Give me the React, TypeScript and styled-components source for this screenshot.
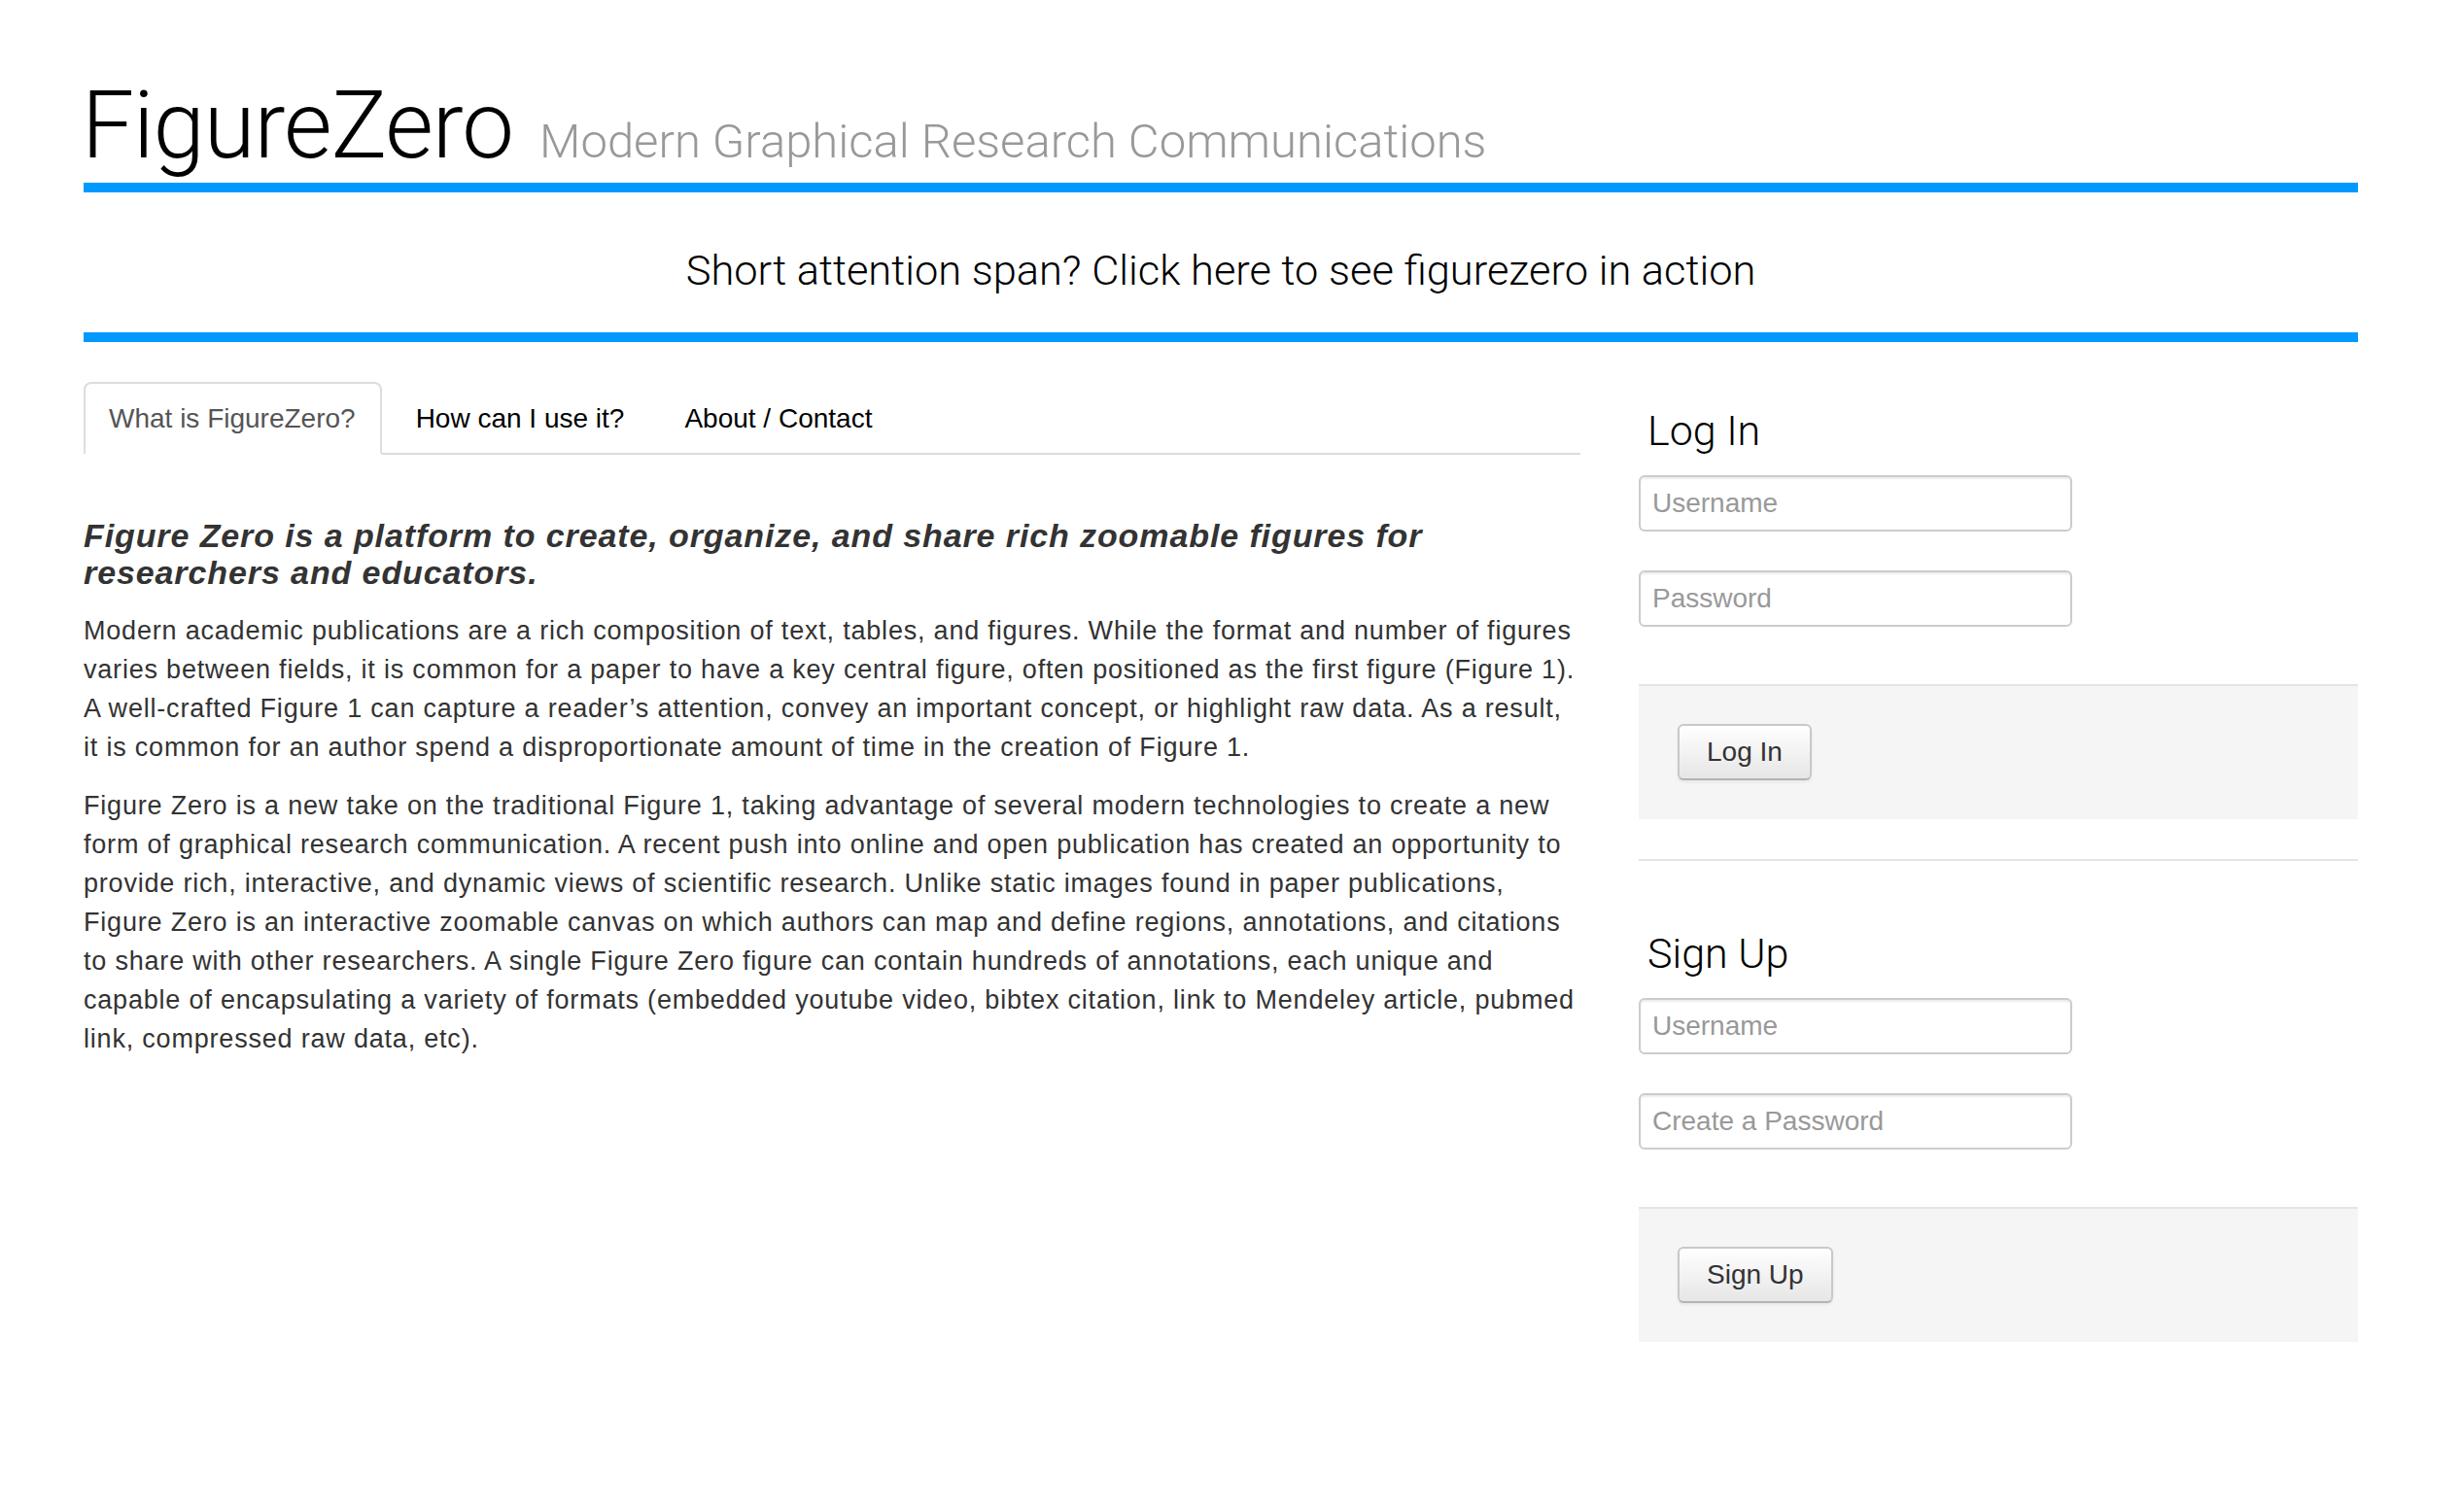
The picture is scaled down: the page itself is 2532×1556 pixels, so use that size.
import { FunctionComponent } from "react";
import styled, { createGlobalStyle } from "styled-components";

const GlobalStyle = createGlobalStyle`
  html, body {
    margin: 0;
    padding: 0;
    background: #fff;
  }
  body {
    font-family: "Liberation Sans", Arial, sans-serif;
    color: #333;
  }
  * {
    box-sizing: border-box;
  }
`;

const Page = styled.div`
  width: 2340px;
  margin-left: 86px;
`;

const Header = styled.header`
  display: flex;
  align-items: baseline;
  gap: 27px;
  padding: 81px 0 11px;
  border-bottom: 10px solid #0099ff;
`;

const Title = styled.h1`
  margin: 0 0 0 -2px;
  font-family: Roboto, "Liberation Sans", sans-serif;
  font-weight: 300;
  font-size: 96px;
  line-height: 96px;
  color: #000;
  letter-spacing: -1px;
`;

const Tagline = styled.small`
  font-family: Roboto, "Liberation Sans", sans-serif;
  font-weight: 300;
  font-size: 49px;
  line-height: 1;
  color: #999;
`;

const Promo = styled.a`
  display: block;
  padding: 56px 0 38px;
  text-align: center;
  font-family: Roboto, "Liberation Sans", sans-serif;
  font-weight: 300;
  font-size: 43.4px;
  line-height: 50px;
  color: #000;
  text-decoration: none;
  border-bottom: 10px solid #0099ff;
`;

const Main = styled.main`
  display: grid;
  grid-template-columns: 1540px 740px;
  column-gap: 60px;
  align-items: start;
  margin-top: 41px;
`;

const TabBar = styled.ul`
  display: flex;
  margin: 0;
  padding: 0;
  list-style: none;
  border-bottom: 2px solid #ddd;
`;

const Tab = styled.li<{ $active?: boolean }>`
  margin: 0 9px -2px 0;
  padding: 16px 25px 15px 24px;
  font-size: 28px;
  line-height: 40px;
  color: ${(p) => (p.$active ? "#555" : "#000")};
  background: ${(p) => (p.$active ? "#fff" : "transparent")};
  border: 2px solid transparent;
  border-color: ${(p) => (p.$active ? "#ddd #ddd transparent" : "transparent")};
  border-radius: 8px 8px 0 0;
  cursor: pointer;
`;

const Lead = styled.h4`
  margin: 64px 0 21px;
  font-size: 34px;
  line-height: 38px;
  font-weight: 700;
  font-style: italic;
  letter-spacing: 0.9px;
  color: #333;
  white-space: nowrap;
`;

const Paragraph = styled.p`
  margin: 0 0 20px;
  font-size: 27px;
  line-height: 40px;
  letter-spacing: 0.8px;
  color: #333;
  white-space: nowrap;
`;

const Side = styled.aside`
  display: flex;
  flex-direction: column;
`;

const Panel = styled.form`
  padding-top: 26px;
`;

const Legend = styled.h3`
  margin: 0 0 22px;
  padding-left: 9px;
  font-family: Roboto, "Liberation Sans", sans-serif;
  font-weight: 300;
  font-size: 43px;
  line-height: 48px;
  color: #000;
`;

const Fields = styled.div`
  display: flex;
  flex-direction: column;
  gap: 40px;
`;

const Field = styled.input`
  display: block;
  width: 446px;
  height: 58px;
  padding: 0 12px;
  font-family: "Liberation Sans", Arial, sans-serif;
  font-size: 28px;
  color: #555;
  background: #fff;
  border: 2px solid #ccc;
  border-radius: 6px;
  box-shadow: inset 0 2px 2px rgba(0, 0, 0, 0.075);
  outline: none;
  &::placeholder {
    color: #999;
  }
`;

const Actions = styled.div`
  margin-top: 59px;
  padding: 39px 40px 40px;
  background: #f5f5f5;
  border-top: 2px solid #e5e5e5;
`;

const Button = styled.button`
  padding: 7px 28px;
  font-family: "Liberation Sans", Arial, sans-serif;
  font-size: 28px;
  line-height: 40px;
  color: #333;
  background: linear-gradient(#ffffff, #e6e6e6);
  border: 2px solid #c8c8c8;
  border-bottom-color: #b3b3b3;
  border-radius: 6px;
  box-shadow: inset 0 2px 0 rgba(255, 255, 255, 0.2), 0 2px 3px rgba(0, 0, 0, 0.06);
  cursor: pointer;
`;

const Divider = styled.hr`
  margin: 41px 0 45px;
  border: 0;
  border-top: 2px solid #e5e5e5;
`;

const tabs = ["What is FigureZero?", "How can I use it?", "About / Contact"];

const lead = [
  "Figure Zero is a platform to create, organize, and share rich zoomable figures for",
  "researchers and educators.",
];

const paragraphs = [
  [
    "Modern academic publications are a rich composition of text, tables, and figures. While the format and number of figures",
    "varies between fields, it is common for a paper to have a key central figure, often positioned as the first figure (Figure 1).",
    "A well-crafted Figure 1 can capture a reader\u2019s attention, convey an important concept, or highlight raw data. As a result,",
    "it is common for an author spend a disproportionate amount of time in the creation of Figure 1.",
  ],
  [
    "Figure Zero is a new take on the traditional Figure 1, taking advantage of several modern technologies to create a new",
    "form of graphical research communication. A recent push into online and open publication has created an opportunity to",
    "provide rich, interactive, and dynamic views of scientific research. Unlike static images found in paper publications,",
    "Figure Zero is an interactive zoomable canvas on which authors can map and define regions, annotations, and citations",
    "to share with other researchers. A single Figure Zero figure can contain hundreds of annotations, each unique and",
    "capable of encapsulating a variety of formats (embedded youtube video, bibtex citation, link to Mendeley article, pubmed",
    "link, compressed raw data, etc).",
  ],
];

const forms = [
  { title: "Log In", fields: ["Username", "Password"], action: "Log In" },
  { title: "Sign Up", fields: ["Username", "Create a Password"], action: "Sign Up" },
];

const Lines = ({ lines }: { lines: string[] }) => (
  <>
    {lines.map((line, i) => (
      <span key={i}>
        {line}
        {i < lines.length - 1 && <br />}
      </span>
    ))}
  </>
);

const App: FunctionComponent = () => {
  return (
    <Page>
      <GlobalStyle />
      <Header>
        <Title>FigureZero</Title>
        <Tagline>Modern Graphical Research Communications</Tagline>
      </Header>
      <Promo href="#">Short attention span? Click here to see figurezero in action</Promo>
      <Main>
        <section>
          <TabBar>
            {tabs.map((t, i) => (
              <Tab key={t} $active={i === 0}>
                {t}
              </Tab>
            ))}
          </TabBar>
          <Lead>
            <Lines lines={lead} />
          </Lead>
          {paragraphs.map((p, i) => (
            <Paragraph key={i}>
              <Lines lines={p} />
            </Paragraph>
          ))}
        </section>
        <Side>
          {forms.map((f, i) => (
            <div key={f.title}>
              {i > 0 && <Divider />}
              <Panel onSubmit={(e) => e.preventDefault()}>
                <Legend>{f.title}</Legend>
                <Fields>
                  {f.fields.map((name) => (
                    <Field
                      key={name}
                      type={name.includes("Password") ? "password" : "text"}
                      placeholder={name}
                    />
                  ))}
                </Fields>
                <Actions>
                  <Button type="submit">{f.action}</Button>
                </Actions>
              </Panel>
            </div>
          ))}
        </Side>
      </Main>
    </Page>
  );
};

export default App;
